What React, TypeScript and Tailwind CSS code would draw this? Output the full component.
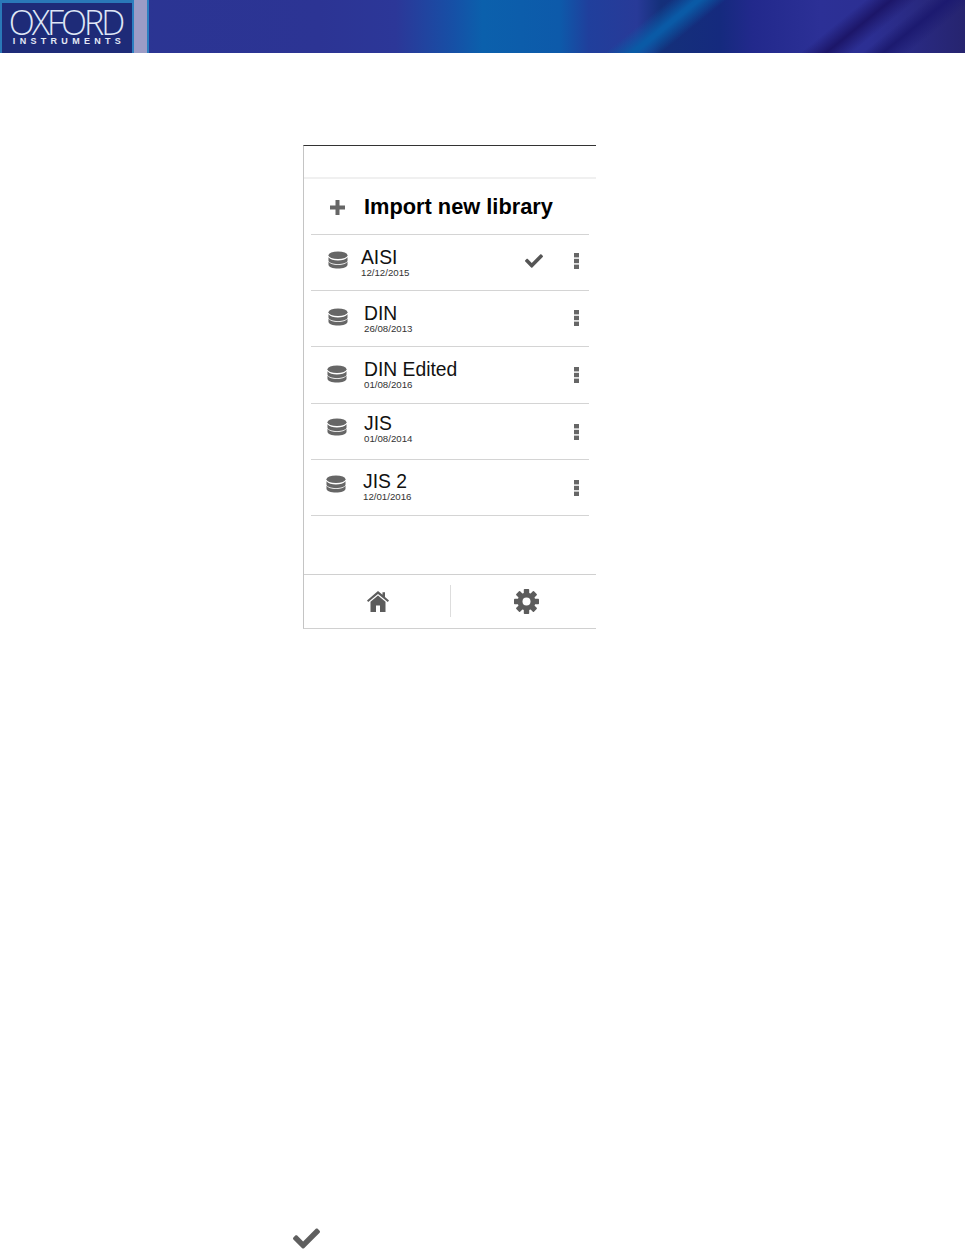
import { FaCheck } from "react-icons/fa";

type RowData = {
  name: string;
  date: string;
  iconClass: string;
  textClass: string;
  actionClass: string;
  check?: boolean;
  edited?: boolean;
};

const rows: RowData[] = [
  { name: "AISI", date: "12/12/2015", iconClass: "ml-[17px] mb-[5px]", textClass: "ml-[13px]", actionClass: "mb-[3px]", check: true },
  { name: "DIN", date: "26/08/2013", iconClass: "ml-[17px] mb-[3px]", textClass: "ml-[16px]", actionClass: "mb-[1px]" },
  { name: "DIN Edited", date: "01/08/2016", iconClass: "ml-[16px] mb-[1px]", textClass: "ml-[17px]", actionClass: "mt-px" },
  { name: "JIS", date: "01/08/2014", iconClass: "ml-[16px] mb-[9px]", textClass: "ml-[17px] mb-[5px]", actionClass: "mt-[2px]" },
  { name: "JIS 2", date: "12/01/2016", iconClass: "ml-[15px] mb-[7px]", textClass: "ml-[17px] mb-px", actionClass: "mt-px" },
];

function DatabaseIcon() {
  return (
    <svg viewBox="0 0 21 18" className="block h-[18px] w-[20px] text-[#666666]" fill="currentColor">
      <ellipse cx="10.5" cy="4" rx="10" ry="4" />
      <path d="M.5 6.2C2.5 8.6 6 9.4 10.5 9.4S18.5 8.6 20.5 6.2V9.6C20.5 11.8 16 13.4 10.5 13.4S.5 11.8 .5 9.6Z" />
      <path d="M.5 10.8C2.5 13.2 6 14.2 10.5 14.2S18.5 13.2 20.5 10.8V14C20.5 16.2 16 18 10.5 18S.5 16.2 .5 14Z" />
    </svg>
  );
}

function DotsIcon() {
  return (
    <svg viewBox="0 0 5 16" className="block h-[16px] w-[5px] text-[#666666]" fill="currentColor">
      <rect y="0" width="5" height="4.4" />
      <rect y="5.8" width="5" height="4.4" />
      <rect y="11.6" width="5" height="4.4" />
    </svg>
  );
}

function PlusIcon() {
  return (
    <svg viewBox="0 0 15 15" className="ml-[26px] block h-[15px] w-[15px] text-[#666666]" fill="currentColor">
      <path d="M5.5 0H9.5V5.5H15V9.5H9.5V15H5.5V9.5H0V5.5H5.5Z" />
    </svg>
  );
}

function HomeIcon() {
  return (
    <svg viewBox="0 0 22 21" className="block h-[21px] w-[22px] text-[#5c5c5c]" fill="currentColor">
      <path d="M11 0L15.5 3.8V1.2H18V6L22 9.6L20.8 11L11 3L1.2 11L0 9.6Z" />
      <path d="M11 4.6L18.5 10.8V21H13V14.5H9V21H3.5V10.8Z" />
    </svg>
  );
}

function GearIcon() {
  return (
    <svg viewBox="0 0 25 25" className="block h-[25px] w-[25px] text-[#5c5c5c]" fill="currentColor">
      <rect x="9.8" y="0" width="5.4" height="25" rx="0.8" />
      <rect x="9.8" y="0" width="5.4" height="25" rx="0.8" transform="rotate(45 12.5 12.5)" />
      <rect x="9.8" y="0" width="5.4" height="25" rx="0.8" transform="rotate(90 12.5 12.5)" />
      <rect x="9.8" y="0" width="5.4" height="25" rx="0.8" transform="rotate(135 12.5 12.5)" />
      <circle cx="12.5" cy="12.5" r="9" />
      <circle cx="12.5" cy="12.5" r="4" fill="#ffffff" />
    </svg>
  );
}

function Row({ name, date, iconClass, textClass, actionClass, check, edited }: RowData) {
  return (
    <div className="flex h-[56.2px] items-center border-b border-[#d4d4d4]">
      <div className={`relative ${iconClass}`}>
        <DatabaseIcon />
        {edited && <span className="absolute -right-[2px] bottom-[-1px] h-[9px] w-[9px] rounded-full bg-[#f39a14]" />}
      </div>
      <div className={`${textClass} flex flex-col`}>
        <span className="text-[19.3px] leading-[20px] text-[#111111]">{name}</span>
        <span className="text-[9.7px] leading-[10px] text-[#333333]">{date}</span>
      </div>
      <div className={`ml-auto flex items-center ${actionClass}`}>
        {check && <FaCheck className="mr-[31px] h-[18px] w-[18px] text-[#555555]" />}
        <div className="mr-[10px]">
          <DotsIcon />
        </div>
      </div>
    </div>
  );
}

export default function App() {
  return (
    <div className="min-h-[1257px] bg-white font-['Liberation_Sans',Arial,sans-serif]">
      <header className="flex h-[53px] bg-[linear-gradient(141deg,transparent_65%,#0a5aa6_67.5%,#0a5aa6_68%,transparent_70.5%),linear-gradient(141deg,transparent_84%,#1c1669_86.5%,transparent_89%),linear-gradient(141deg,transparent_90%,#1c1a70_92%,transparent_94.5%),linear-gradient(90deg,#2a3592_0%,#2c3494_33%,#2c3798_41%,#1650a6_47%,#0b60ac_50%,#0d5aaa_58%,#203f9c_61%,#283a98_66%,#14307a_68.5%,#152a7e_74.6%,#22298c_78%,#2c3096_85%,#2c2f93_90%,#26246f_100%)]">
        <div className="flex w-[132px] flex-col items-center border-l-2 border-t-[3px] border-l-[#2a78b8] border-t-[#2a78b8] bg-[#1e2b78] pt-[5px]">
          <span className="h-[28px] pr-[3px] text-[34px] leading-[28px] font-light tracking-[-3px] text-[#dfe6f5] [font-family:'Open_Sans',sans-serif]">OXFORD</span>
          <span className="mt-px pl-[4px] text-[9px] leading-[9px] font-bold tracking-[4.3px] text-[#e4e8f5]">INSTRUMENTS</span>
        </div>
        <div className="w-[17px] border-x-2 border-[#2d7fc0] bg-[#9d9cc6]" />
      </header>

      <main className="ml-[303px] mt-[92px] w-[293px] border-l border-b border-t border-l-[#c4c4c4] border-b-[#d0d0d0] border-t-[#333333]">
        <div className="h-[33px] border-b-2 border-[#f0f0f0]" />
        <div className="flex h-[55px] items-center pt-[2px]">
          <PlusIcon />
          <span className="ml-[19px] text-[21.8px] font-bold text-black">Import new library</span>
        </div>
        <div className="ml-[7px] w-[278px] border-t border-[#d4d4d4]">
          {rows.map((row) => (
            <Row key={row.name} {...row} />
          ))}
        </div>
        <div className="mt-[58px] flex h-[54px] items-center border-t border-[#d0d0d0]">
          <div className="flex flex-1 justify-center pl-[1px]">
            <HomeIcon />
          </div>
          <div className="h-[32px] w-px bg-[#dddddd]" />
          <div className="flex w-[145px] justify-center pl-[6px]">
            <GearIcon />
          </div>
        </div>
      </main>

      <FaCheck className="ml-[293px] mt-[596px] h-[27px] w-[27px] text-[#5f5f5f]" />
    </div>
  );
}
